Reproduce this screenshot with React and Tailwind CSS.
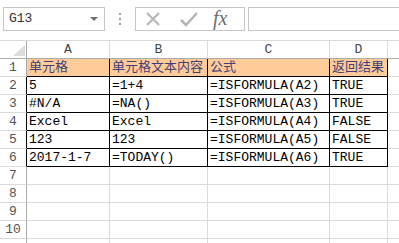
import React from "react";

const cols = [
  { key: "A", w: "w-[83px]" },
  { key: "B", w: "w-[98px]" },
  { key: "C", w: "w-[122px]" },
  { key: "D", w: "w-[58px]" },
];

const data = [
  ["单元格", "单元格文本内容", "公式", "返回结果"],
  ["5", "=1+4", "=ISFORMULA(A2)", "TRUE"],
  ["#N/A", "=NA()", "=ISFORMULA(A3)", "TRUE"],
  ["Excel", "Excel", "=ISFORMULA(A4)", "FALSE"],
  ["123", "123", "=ISFORMULA(A5)", "FALSE"],
  ["2017-1-7", "=TODAY()", "=ISFORMULA(A6)", "TRUE"],
];

const font = "font-['Liberation_Mono','Noto_Sans_CJK_SC',monospace]";

const FormulaBar = () => (
  <div className="h-[40px] flex items-start pt-[7px] bg-white">
    <div className="ml-[3px] w-[102px] h-[24px] border border-[#c6c6c6] flex items-center justify-between pl-[5px] pr-[6px]">
      <span className={`${font} text-[13px] text-[#333]`}>G13</span>
      <span className="w-0 h-0 border-l-[4px] border-r-[4px] border-t-[4px] border-l-transparent border-r-transparent border-t-[#707070]" />
    </div>
    <div className="w-[30px] h-[24px] flex flex-col items-center justify-center gap-[3px]">
      <span className="w-[2px] h-[2px] bg-[#a0a0a0]" />
      <span className="w-[2px] h-[2px] bg-[#a0a0a0]" />
      <span className="w-[2px] h-[2px] bg-[#a0a0a0]" />
    </div>
    <div className="w-[110px] h-[24px] border border-[#c6c6c6] flex items-center">
      <svg width="16" height="16" viewBox="0 0 16 16" className="ml-[9px]">
        <path d="M2 2 L14 14 M14 2 L2 14" stroke="#b4b4b4" strokeWidth="2" fill="none" />
      </svg>
      <svg width="20" height="16" viewBox="0 0 20 16" className="ml-[18px]">
        <path d="M2 9 L7 14 L18 2" stroke="#b4b4b4" strokeWidth="2.5" fill="none" />
      </svg>
      <span className="ml-[14px] font-['Liberation_Serif',serif] italic text-[20px] leading-none text-[#6e6e6e] -mt-[2px]">
        fx
      </span>
    </div>
    <div className="ml-[3px] flex-1 h-[24px] border border-[#c6c6c6] border-r-0" />
  </div>
);

const ColHeader = () => (
  <div className="flex h-[19px] border-t border-[#dadada] border-b border-b-[#ababab] bg-white">
    <div className="w-[27px] shrink-0 border-r border-[#ababab] relative">
      <svg width="12" height="11" className="absolute right-[1px] bottom-[2px]">
        <polygon points="12,0 12,11 0,11" fill="#dcdcdc" />
      </svg>
    </div>
    {cols.map((c) => (
      <div
        key={c.key}
        className={`${c.w} shrink-0 border-r border-[#dadada] flex items-center justify-center ${font} text-[13px] text-[#444]`}
      >
        {c.key}
      </div>
    ))}
    <div className="flex-1" />
  </div>
);

const Row = ({ n, cells, label = true }) => {
  const isHead = n === 1;
  const inTable = n <= 6;
  return (
    <div className="flex h-[18px]">
      <div
        className={`w-[27px] shrink-0 border-r border-b border-b-[#dadada] ${
          inTable && !isHead ? "border-r-black" : "border-r-[#ababab]"
        } flex items-center justify-center ${font} text-[13px] text-[#555]`}
      >
        {label ? n : ""}
      </div>
      {cols.map((c, i) => (
        <div
          key={c.key}
          className={`${c.w} shrink-0 border-r border-b pl-[2px] flex items-center whitespace-nowrap overflow-hidden ${font} text-[13px] ${
            inTable ? "border-black" : "border-[#dadada]"
          } ${isHead ? "bg-[#ffcc99] text-[#3f3f76]" : "text-black"}`}
        >
          {cells ? cells[i] : ""}
        </div>
      ))}
      <div className="flex-1 border-b border-[#dadada]" />
    </div>
  );
};

export default function App() {
  const rows = [];
  for (let n = 1; n <= 11; n++)
    rows.push(<Row key={n} n={n} cells={data[n - 1]} label={n <= 10} />);
  return (
    <div className="w-[399px] h-[243px] overflow-hidden bg-white">
      <FormulaBar />
      <ColHeader />
      {rows}
    </div>
  );
}
